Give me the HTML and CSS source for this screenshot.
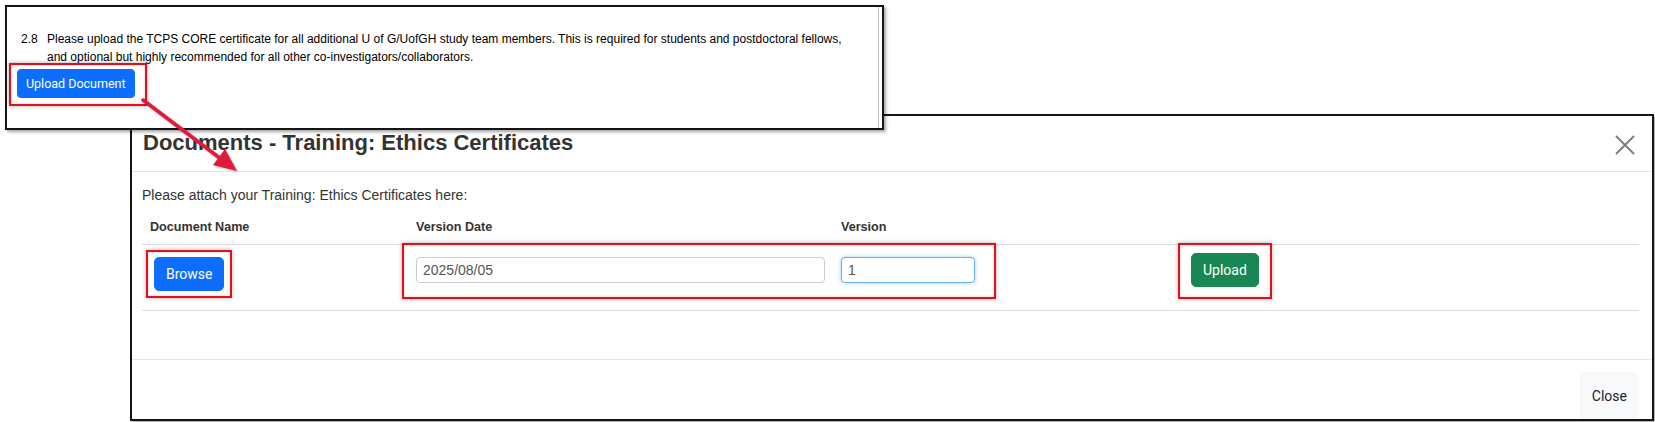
FILE: index.html
```html
<!DOCTYPE html>
<html lang="en">
<head>
    <meta charset="UTF-8">
    <title>Documents - Training: Ethics Certificates</title>
    <link rel="stylesheet" href="styles.css">
</head>
<body>
    <div class="canvas">
        <!-- modal screenshot -->
        <div class="shot shot-modal">
            <div class="modal-header">
                <h4 class="modal-title">Documents - Training: Ethics Certificates</h4>
                <button class="btn-close" aria-label="Close">
                    <svg width="20" height="20" viewBox="0 0 20 20">
                        <path d="M1 1 L19 19 M19 1 L1 19" stroke="#7a7a7a" stroke-width="1.8" fill="none"/>
                    </svg>
                </button>
            </div>
            <div class="modal-body">
                <p class="intro">Please attach your Training: Ethics Certificates here:</p>
                <table class="doc-table">
                    <colgroup>
                        <col style="width: 266px">
                        <col style="width: 425px">
                        <col style="width: 350px">
                        <col style="width: 456px">
                    </colgroup>
                    <thead>
                        <tr>
                            <th>Document Name</th>
                            <th>Version Date</th>
                            <th>Version</th>
                            <th></th>
                        </tr>
                    </thead>
                    <tbody>
                        <tr>
                            <td><button class="btn btn-primary btn-browse">Browse</button></td>
                            <td><input type="text" class="form-input date-input" value="2025/08/05"></td>
                            <td><input type="text" class="form-input version-input" value="1"></td>
                            <td><button class="btn btn-success">Upload</button></td>
                        </tr>
                    </tbody>
                </table>
            </div>
            <div class="modal-footer">
                <button class="btn btn-light">Close</button>
            </div>
        </div>

        <!-- form screenshot -->
        <div class="shot shot-form">
            <div class="form-inner">
                <div class="question">
                    <span class="q-num">2.8</span>
                    <span class="q-text">Please upload the TCPS CORE certificate for all additional U of G/UofGH study team members. This is required for students and postdoctoral fellows, and optional but highly recommended for all other co-investigators/collaborators.</span>
                </div>
                <button class="btn btn-primary btn-small">Upload Document</button>
            </div>
        </div>

        <!-- annotations -->
        <div class="mark mark-upload-doc"></div>
        <div class="mark mark-browse"></div>
        <div class="mark mark-inputs"></div>
        <div class="mark mark-upload"></div>

        <svg class="arrow" width="260" height="190" viewBox="0 0 260 190">
            <line x1="143" y1="100" x2="221" y2="159" stroke="#e2193b" stroke-width="3.5" stroke-linecap="round"/>
            <polygon points="237,171 213,165 225,149" fill="#e2193b"/>
        </svg>
    </div>
</body>
</html>
```

FILE: styles.css
```css
body {
    margin: 0;
    background-color: #fff;
    font-family: "Liberation Sans", Arial, sans-serif;
    color: #333;
}

.canvas {
    position: relative;
    width: 1655px;
    height: 422px;
    overflow: hidden;
}

.shot {
    position: absolute;
    box-sizing: border-box;
    background-color: #fff;
    border: 2px solid #151515;
    box-shadow: 2px 2px 3px rgba(0, 0, 0, 0.35);
}

/* modal */
.shot-modal {
    left: 130px;
    top: 114px;
    width: 1524px;
    height: 307px;
    display: flex;
    flex-direction: column;
}

.modal-header {
    height: 56px;
    box-sizing: border-box;
    padding: 0 17px 0 11px;
    display: flex;
    align-items: center;
    justify-content: space-between;
    border-bottom: 1px solid #e5e5e5;
}

.modal-title {
    margin: 0;
    font-size: 22px;
    line-height: 1.1;
    font-weight: bold;
    color: #333;
}

.btn-close {
    border: none;
    background: none;
    padding: 0;
    width: 20px;
    height: 20px;
    margin-top: 2px;
}

.btn-close svg {
    display: block;
}

.modal-body {
    flex: 1;
    padding: 13px 13px 0 10px;
}

.intro {
    margin: 0 0 4px;
    font-size: 14px;
    line-height: 20px;
}

.doc-table {
    table-layout: fixed;
    width: 1497px;
    border-collapse: collapse;
    font-size: 14px;
    line-height: 20px;
}

.doc-table th {
    text-align: left;
    font-size: 12.6px;
    font-weight: bold;
    padding: 8px 8px 7px;
    border-bottom: 1px solid #ddd;
}

.doc-table td {
    height: 49px;
    padding: 8px;
    vertical-align: top;
    border-bottom: 1px solid #ddd;
}

.form-input {
    display: block;
    box-sizing: border-box;
    height: 26px;
    margin-top: 4px;
    padding: 2px 6px;
    border: 1px solid #ccc;
    border-radius: 4px;
    font-family: "Liberation Sans", Arial, sans-serif;
    font-size: 14px;
    color: #555;
    outline: none;
}

.date-input {
    width: 100%;
}

.version-input {
    width: 134px;
    border-color: #66afe9;
    box-shadow: 0 0 4px rgba(102, 175, 233, 0.6);
}

.modal-footer {
    height: 60px;
    box-sizing: border-box;
    padding: 12px 13px 0;
    display: flex;
    justify-content: flex-end;
    border-top: 1px solid #e5e5e5;
}

/* buttons */
.btn {
    font-family: Roboto, "Open Sans", sans-serif;
    font-size: 14px;
    line-height: 20px;
    padding: 6px 11px;
    border: 1px solid transparent;
    border-radius: 5px;
    cursor: pointer;
}

.btn-primary {
    background-color: #0d6efd;
    border-color: #0d6efd;
    color: #fff;
}

.btn-success {
    background-color: #198754;
    border-color: #198754;
    color: #fff;
}

.btn-light {
    background-color: #f8f9fa;
    border-color: #f8f9fa;
    color: #212529;
    padding: 7px 11px;
}

.btn-browse {
    margin: 4px 0 0 4px;
}

.btn-small {
    font-size: 12.5px;
    line-height: 19px;
    padding: 4px 8px;
    border-radius: 4px;
    margin: 3px 0 0 10px;
}

/* form screenshot */
.shot-form {
    left: 5px;
    top: 5px;
    width: 879px;
    height: 125px;
    z-index: 2;
}

.form-inner {
    height: 100%;
    margin-right: 3px;
    border-right: 1px solid #c4c4c4;
}

.question {
    display: flex;
    padding: 23px 0 0 14px;
    font-size: 12px;
    line-height: 18px;
    color: #000;
}

.q-num {
    flex: 0 0 26px;
}

.q-text {
    max-width: 810px;
}

/* annotations */
.mark {
    position: absolute;
    box-sizing: border-box;
    border: 2px solid #e0101e;
    box-shadow: 0 0 4px rgba(0, 0, 0, 0.35), inset 0 0 3px rgba(0, 0, 0, 0.2);
    z-index: 3;
}

.mark-upload-doc {
    left: 9px;
    top: 63px;
    width: 138px;
    height: 43px;
}

.mark-browse {
    left: 146px;
    top: 250px;
    width: 86px;
    height: 48px;
}

.mark-inputs {
    left: 402px;
    top: 243px;
    width: 594px;
    height: 56px;
}

.mark-upload {
    left: 1178px;
    top: 243px;
    width: 94px;
    height: 56px;
}

.arrow {
    position: absolute;
    left: 0;
    top: 0;
    z-index: 4;
    filter: drop-shadow(1px 1px 1px rgba(0, 0, 0, 0.3));
}
```
